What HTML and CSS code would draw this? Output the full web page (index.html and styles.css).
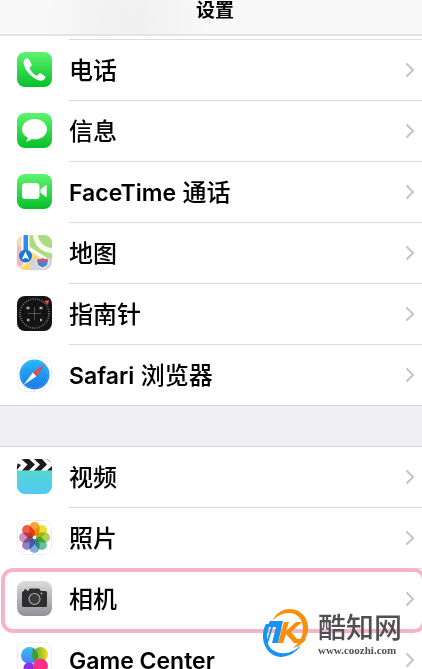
FILE: index.html
```
<!DOCTYPE html>
<html lang="zh-CN">
<head>
    <meta charset="UTF-8">
    <meta name="viewport" content="width=device-width, initial-scale=1.0">
    <title>设置</title>
    <link rel="stylesheet" href="styles.css">
</head>
<body>
    <svg width="0" height="0" class="defs" aria-hidden="true">
        <defs>
            <linearGradient id="green" x1="0" y1="0" x2="0" y2="1">
                <stop offset="0" stop-color="#5ff36f"/>
                <stop offset="1" stop-color="#06c029"/>
            </linearGradient>
            <linearGradient id="blue" x1="0" y1="0" x2="0" y2="1">
                <stop offset="0" stop-color="#27b8f6"/>
                <stop offset="1" stop-color="#1c77e8"/>
            </linearGradient>
            <linearGradient id="aqua" x1="0" y1="0" x2="0" y2="1">
                <stop offset="0" stop-color="#54e0bf"/>
                <stop offset="1" stop-color="#52c8f4"/>
            </linearGradient>
            <linearGradient id="gray" x1="0" y1="0" x2="0" y2="1">
                <stop offset="0" stop-color="#dcdcde"/>
                <stop offset="1" stop-color="#909096"/>
            </linearGradient>
            <linearGradient id="sky" x1="0" y1="0" x2="0" y2="1">
                <stop offset="0" stop-color="#35c3ee"/>
                <stop offset="1" stop-color="#4a7df5"/>
            </linearGradient>
            <linearGradient id="lime" x1="0" y1="0" x2="1" y2="0">
                <stop offset="0" stop-color="#4caf32"/>
                <stop offset="1" stop-color="#f5dd1d"/>
            </linearGradient>
            <clipPath id="rounded"><rect width="35" height="35" rx="8"/></clipPath>
            <symbol id="chevron" viewBox="0 0 10 16">
                <path d="M1.5 1.5 8 8l-6.500 6.500" fill="none" stroke="#c4c4c9" stroke-width="2"/>
            </symbol>
        </defs>
    </svg>
    <div class="screen">
        <header class="navbar">
            <h1>设置</h1>
        </header>
        <main>
            <nav class="group first">
                <a class="row" href="#phone">
                    <svg class="icon" viewBox="0 0 35 35">
                        <rect width="35" height="35" rx="8" fill="url(#green)"/>
                        <path d="M9 6.500c-2 1-2.800 3-2.200 5.500 1.700 7 8.200 14.200 15 16.300 2.600.8 5 .2 6.400-2 .6-1 .3-1.700-.5-2.300l-3.600-2.300c-1-.6-1.700-.4-2.400.4l-1 1.200c-.5.5-1 .6-1.700.2-2.400-1.400-5-4.300-6.200-6.800-.3-.7-.2-1.200.3-1.600l1-.9c.8-.7.9-1.300.4-2.200l-2.500-4.400C11.400 6.300 10.300 5.900 9 6.500z" fill="#fff"/>
                    </svg>
                    <span class="label">电话</span>
                    <svg class="chevron"><use href="#chevron"/></svg>
                </a>
                <a class="row" href="#messages">
                    <svg class="icon" viewBox="0 0 35 35">
                        <rect width="35" height="35" rx="8" fill="url(#green)"/>
                        <path d="M17.500 6C10.500 6 5 10.500 5 16.200c0 3.700 2.300 6.800 5.800 8.600-.1 1.500-.8 2.600-1.800 3.600 2.300 0 4.300-1 5.600-2.400 1 .2 1.900.3 2.900.3 7 0 12.500-4.500 12.500-10.100S24.500 6 17.500 6z" fill="#fff"/>
                    </svg>
                    <span class="label">信息</span>
                    <svg class="chevron"><use href="#chevron"/></svg>
                </a>
                <a class="row" href="#facetime">
                    <svg class="icon" viewBox="0 0 35 35">
                        <rect width="35" height="35" rx="8" fill="url(#green)"/>
                        <rect x="5" y="9" width="17.500" height="16" rx="3.500" fill="#fff"/>
                        <path d="M23.500 15.200l5-4c.6-.5 1.200-.2 1.200.5v10.600c0 .7-.6 1-1.200.5l-5-4z" fill="#fff"/>
                    </svg>
                    <span class="label"><span class="latin">FaceTime</span> 通话</span>
                    <svg class="chevron"><use href="#chevron"/></svg>
                </a>
                <a class="row" href="#maps">
                    <svg class="icon" viewBox="0 0 35 35">
                        <g clip-path="url(#rounded)">
                            <rect width="35" height="35" fill="#f5efdf"/>
                            <path d="M0 0h6v35H0z" fill="#f8d9b0"/>
                            <path d="M0 9l6 6v14l-6 4z" fill="#f5b6c0"/>
                            <path d="M11 0h24v26L11 13z" fill="#a9dc83"/>
                            <path d="M18-2c1 12 8 17 19 18" fill="none" stroke="#fbfaf2" stroke-width="5"/>
                            <path d="M10 10l25 16v4L10 18z" fill="#fbfaf2"/>
                            <path d="M10 14l15 10-12 11H3l8-8z" fill="#fcd968"/>
                            <path d="M13 24l22-1v12H13z" fill="#d7d4d9"/>
                            <path d="M4.500 0h8v20h-8z" fill="#fff"/>
                            <path d="M6.500 0h4.500v18H6.500z" fill="#2f8ce8"/>
                            <circle cx="8.500" cy="21" r="6.500" fill="#1879d8"/>
                            <path d="M8.500 16.500l3.700 8-3.700-1.800-3.700 1.800z" fill="#fff"/>
                            <path d="M20.500 23.500q2.500 1 5-.5 2.500 1.500 5 .5 3 7-5 9.500-8-2.500-5-9.500z" fill="#4a82ce" stroke="#fff"/>
                            <path d="M20.500 23.500q2.500 1 5-.5 2.500 1.500 5 .5l.5 3H20z" fill="#c75b70"/>
                        </g>
                    </svg>
                    <span class="label">地图</span>
                    <svg class="chevron"><use href="#chevron"/></svg>
                </a>
                <a class="row" href="#compass">
                    <svg class="icon" viewBox="0 0 35 35">
                        <rect width="35" height="35" rx="8" fill="#131314"/>
                        <circle cx="17.500" cy="17.500" r="14.500" fill="none" stroke="#8f8f8f" stroke-width="1.800" stroke-dasharray=".7 1.500"/>
                        <path d="M17.500 11v13M11 17.500h13" stroke="#666" stroke-width=".8"/>
                        <path d="M9.500 12h3M22.500 12h3M10 24h2.500M23 24h2" stroke="#aaa" stroke-width="2.500"/>
                        <path d="M27 5l5-1-1 5z" fill="#f0473c"/>
                    </svg>
                    <span class="label">指南针</span>
                    <svg class="chevron"><use href="#chevron"/></svg>
                </a>
                <a class="row" href="#safari">
                    <svg class="icon" viewBox="0 0 35 35">
                        <rect x=".5" y=".5" width="34" height="34" rx="8" fill="#fff" stroke="#f1f1f1"/>
                        <circle cx="17.500" cy="17.500" r="15" fill="url(#blue)"/>
                        <circle cx="17.500" cy="17.500" r="13.500" fill="none" stroke="#8dcdf7" stroke-width="1" stroke-dasharray=".5 1.500"/>
                        <path d="M28.500 7L15.800 15.500l3.600 3.800z" fill="#f0483e"/>
                        <path d="M6.500 28l9.300-12.500 3.600 3.800z" fill="#fff"/>
                    </svg>
                    <span class="label"><span class="latin">Safari</span> 浏览器</span>
                    <svg class="chevron"><use href="#chevron"/></svg>
                </a>
            </nav>
            <nav class="group">
                <a class="row" href="#videos">
                    <svg class="icon" viewBox="0 0 35 35">
                        <g clip-path="url(#rounded)">
                            <rect width="35" height="35" fill="url(#aqua)"/>
                            <rect width="35" height="11.500" fill="#fff"/>
                            <path d="M0 4l4 2-4 5zM4 0h8l6 5.500-6 6H5l5.500-6zM17 0h8l5 5.500-6 6h-7l6-6zM29 0h6v4zM35 7v4.500h-5z" fill="#1b1b1b"/>
                        </g>
                    </svg>
                    <span class="label">视频</span>
                    <svg class="chevron"><use href="#chevron"/></svg>
                </a>
                <a class="row" href="#photos">
                    <svg class="icon" viewBox="0 0 35 35">
                        <rect x=".5" y=".5" width="34" height="34" rx="8" fill="#fff" stroke="#ececec"/>
                        <g class="petals">
                            <rect x="12.500" y="2" width="10" height="14" rx="5" fill="#f89a1c"/>
                            <rect x="12.500" y="2" width="10" height="14" rx="5" fill="#e8dc1a" transform="rotate(45 17.500 17.500)"/>
                            <rect x="12.500" y="2" width="10" height="14" rx="5" fill="#a5cd49" transform="rotate(90 17.500 17.500)"/>
                            <rect x="12.500" y="2" width="10" height="14" rx="5" fill="#57bd8b" transform="rotate(135 17.500 17.500)"/>
                            <rect x="12.500" y="2" width="10" height="14" rx="5" fill="#6aa5dc" transform="rotate(180 17.500 17.500)"/>
                            <rect x="12.500" y="2" width="10" height="14" rx="5" fill="#8575bd" transform="rotate(225 17.500 17.500)"/>
                            <rect x="12.500" y="2" width="10" height="14" rx="5" fill="#c987b5" transform="rotate(270 17.500 17.500)"/>
                            <rect x="12.500" y="2" width="10" height="14" rx="5" fill="#ee4a36" transform="rotate(315 17.500 17.500)"/>
                        </g>
                    </svg>
                    <span class="label">照片</span>
                    <svg class="chevron"><use href="#chevron"/></svg>
                </a>
                <a class="row selected" href="#camera">
                    <svg class="icon" viewBox="0 0 35 35">
                        <rect width="35" height="35" rx="8" fill="url(#gray)"/>
                        <path d="M7 10h4l2-2.500h9l2 2.500h4.500q1.500 0 1.500 1.500v13q0 1.500-1.500 1.500h-22Q5 26 5 24.500v-13Q5 10 7 10z" fill="#2e2e30"/>
                        <rect x="7" y="8.500" width="3" height="1.500" fill="#2e2e30"/>
                        <circle cx="17.500" cy="18" r="5.500" fill="#3c3c3e" stroke="#aaa" stroke-width="1.200"/>
                        <circle cx="24.500" cy="12.500" r=".9" fill="#e2b53a"/>
                    </svg>
                    <span class="label">相机</span>
                    <svg class="chevron"><use href="#chevron"/></svg>
                </a>
                <a class="row" href="#gamecenter">
                    <svg class="icon" viewBox="0 0 35 35">
                        <rect x=".5" y=".5" width="34" height="34" rx="8" fill="#fff" stroke="#ececec"/>
                        <circle cx="23.500" cy="12.500" r="7.500" fill="url(#lime)"/>
                        <circle cx="12.500" cy="13.500" r="8.500" fill="url(#sky)"/>
                        <path d="M16 6q5 3 5 8.500-1 4-4 4.500-2-3-2-6z" fill="#3f9d35"/>
                        <circle cx="12" cy="26" r="5.500" fill="#8f30e4"/>
                        <circle cx="23.500" cy="24" r="7.500" fill="#fb2f89"/>
                    </svg>
                    <span class="label"><span class="latin">Game Center</span></span>
                    <svg class="chevron"><use href="#chevron"/></svg>
                </a>
            </nav>
        </main>
        <div class="watermark">
            <svg class="logo" viewBox="0 0 46 50">
                <path d="M9 12C14 3 20 0 27 0c11 0 18 9 18 19 0 10-6 18-15 20 6-5 10-11 10-19C40 10 34 4 26 4 19 4 14 7 9 12z" fill="#f78f0c"/>
                <path d="M3 15C0 20 0 25 0 29c1 11 8 18 17 19 9 0 17-5 21-12-6 6-13 9-20 8C9 43 4 37 4 29c0-5 1-8 3-14z" fill="#1793f5"/>
                <path d="M7 12h13l-5 22H9l4-16-3 0-5 16H3l5-16H4z" fill="#1793f5"/>
                <path d="M21 13h5l-3 9 10-9h6L28 23l6 7h9q-2 4-5 4h-7l-8-9-3 9h-5z" fill="#f78f0c"/>
            </svg>
            <div class="brand">
                <span class="name">酷知网</span>
                <span class="site">www.coozhi.com</span>
            </div>
        </div>
    </div>
</body>
</html>
```
FILE: styles.css
```
*,
*::before,
*::after {
    box-sizing: border-box;
}

body {
    margin: 0;
    font-family: Inter, "Noto Sans CJK SC", sans-serif;
    color: #000;
}

.defs {
    position: absolute;
}

.screen {
    position: relative;
    height: 100vh;
    overflow: hidden;
    background-color: #efeff4;
}

.navbar {
    height: 36px;
    padding-left: 8px;
    background: radial-gradient(circle at 30% 60%, #efefef 0, #f8f8f8 80px);
    border-bottom: 2px solid #e4e4e5;
}

.navbar h1 {
    margin: 0;
    font-size: 19px;
    line-height: 22px;
    font-weight: 700;
    text-align: center;
}

.group {
    background-color: #fff;
    border-bottom: 1px solid #d6d6da;
    margin-bottom: 40px;
}

.first {
    padding-top: 3px;
}

.row {
    position: relative;
    display: flex;
    align-items: center;
    gap: 17px;
    height: 61px;
    padding: 0 7px 0 17px;
    color: inherit;
    text-decoration: none;
}

/* separator starts under the label, not under the icon */
.row::before {
    content: "";
    position: absolute;
    top: 0;
    left: 69px;
    right: 0;
    height: 1px;
    background-color: #dcdcde;
}

.group:not(.first) .row:first-child::before {
    left: 0;
    background-color: #d6d6da;
}

.selected::after {
    content: "";
    position: absolute;
    top: 0;
    left: 1px;
    right: -4px;
    height: 65px;
    border: 4px solid #f4b4c9;
    border-radius: 12px;
    z-index: 1;
}

.icon {
    flex: none;
    width: 35px;
    height: 35px;
}

.petals rect {
    mix-blend-mode: multiply;
    opacity: 0.9;
}

.label {
    flex: 1;
    padding-top: 2px;
    font-size: 24px;
    line-height: 32px;
    font-weight: 500;
}

.latin {
    font-size: 23px;
    font-weight: 600;
}

.chevron {
    flex: none;
    width: 10px;
    height: 16px;
}

.watermark {
    position: absolute;
    right: 20px;
    bottom: 10px;
    z-index: 2;
    display: flex;
    align-items: center;
    gap: 9px;
}

.logo {
    width: 46px;
    height: 50px;
}

.brand {
    display: flex;
    flex-direction: column;
    align-items: flex-start;
    color: #505052;
}

.name {
    font-size: 28px;
    line-height: 32px;
    font-weight: 500;
}

.site {
    font-family: "Liberation Serif", serif;
    font-size: 11px;
    line-height: 12px;
    font-weight: 700;
}
```
